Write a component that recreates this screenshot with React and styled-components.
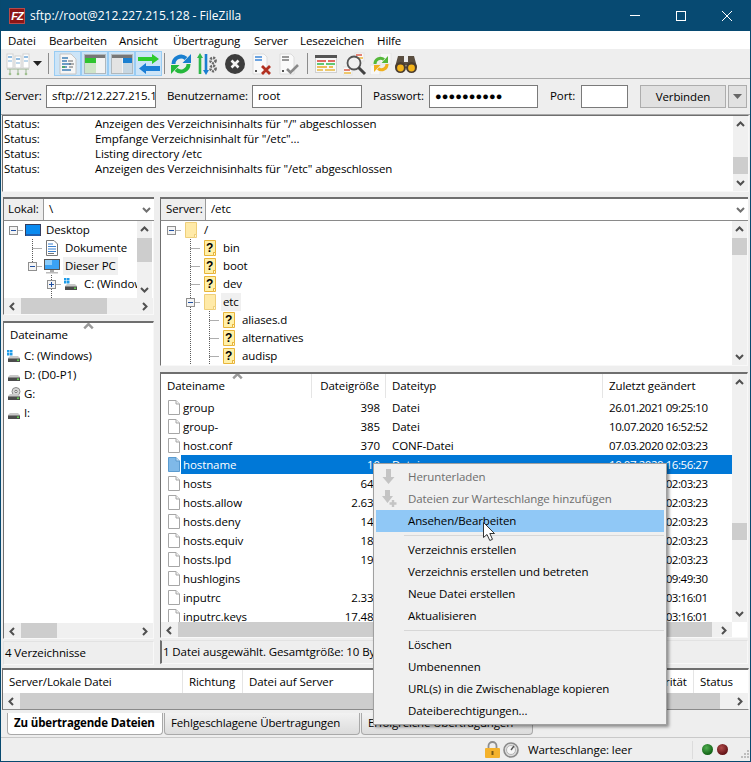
import React from "react";
import styled, { createGlobalStyle } from "styled-components";

const Global = createGlobalStyle`
  html, body { margin: 0; padding: 0; background: #f0f0f0; }
  #root { width: 751px; height: 762px; overflow: hidden; }
  * { box-sizing: border-box; }
`;

const Win = styled.div`
  position: relative; width: 751px; height: 762px; overflow: hidden;
  display: flex; flex-direction: column;
  background: #eeeeee; color: #000;
  border: 1px solid #08496f; border-top: 0;
  font-family: "Open Sans", "Noto Sans", sans-serif; font-size: 11.5px; letter-spacing: -0.1px;
  line-height: 16px; white-space: nowrap;
`;
const TitleBar = styled.div`
  height: 31px; flex: none; background: #074a72; color: #fff; display: flex; align-items: center;
  padding: 0 0 0 8px; font-size: 12px; letter-spacing: 0;
`;
const Logo = styled.span`
  width: 16px; height: 16px; background: #8c1515; border: 1px solid #b84a4a; color: #fff; flex: none;
  font: italic bold 11px/14px "Liberation Sans", sans-serif; text-align: center; letter-spacing: -1px; margin-right: 5px;
`;
const TitleText = styled.span` flex: 1; `;
const WinBtn = styled.span` width: 46px; height: 31px; display: flex; align-items: center; justify-content: center; flex: none; `;
const MenuBar = styled.div`
  height: 18px; flex: none; background: #fff; display: grid;
  grid-template-columns: 41px 70px 54px 81px 46px 77px auto; padding: 2px 0 0 7px; align-items: center;
`;
const Toolbar = styled.div`
  height: 30px; flex: none; background: #eeeeee; border-bottom: 1px solid #a8a8a8;
  display: flex; align-items: center; padding-left: 4px;
`;
const TBtn = styled.span`
  width: ${p => p.$w || 27}px; height: 25px; display: flex; align-items: center; justify-content: center; flex: none;
  margin-right: ${p => p.$mr || 0}px;
  ${p => p.$on ? "background:#cce4f7;border:1px solid #99ccf3;" : ""}
`;
const TSep = styled.span` width: 1px; height: 21px; background: #8c8c8c; margin: 0 ${p => p.$r || 4}px 0 ${p => p.$l || 4}px; flex: none; `;
const Quick = styled.div`
  height: 36px; flex: none; border-bottom: 1px solid #a8a8a8; display: flex; align-items: center; padding: 0 0 1px 4px;
`;
const QLabel = styled.span` width: ${p => p.$w}px; flex: none; `;
const QInput = styled.span`
  width: ${p => p.$w}px; height: 23px; flex: none; background: #fff; border: 1px solid #7a7a7a;
  padding: 2px 5px; overflow: hidden; margin-right: ${p => p.$mr}px;
  ${p => p.$dots ? "letter-spacing:0.1px;font-size:11px;line-height:16px;font-family:'Liberation Sans',sans-serif;" : ""}
`;
const QBtn = styled.span`
  width: ${p => p.$w}px; height: 23px; flex: none; background: #e1e1e1; border: 1px solid #adadad;
  text-align: center; line-height: 21px; margin-right: 2px; display:flex; align-items:center; justify-content:center;
`;
const Sunken = styled.div`
  background: #fff; border-top: 2px solid #6f6f6f; border-left: 1px solid #6f6f6f;
  border-right: 1px solid #f8f8f8; border-bottom: 1px solid #f8f8f8;
`;
const LogPane = styled(Sunken)`
  height: 77px; flex: none; margin: 0 1px 0 1px; display: flex; border-top-width: 1px;
`;
const LogBody = styled.div` flex: 1; padding: 0 0 0 1px; line-height: 15px; `;
const LogRow = styled.div` display: grid; grid-template-columns: 91px auto; `;
const PanesRow = styled.div` display: flex; flex: none; height: 466px; margin: 5px 0 0 2px; `;
const Col = styled.div` display: flex; flex-direction: column; width: ${p => p.$w}px; flex: none; margin-right: ${p => p.$mr || 0}px; `;
const PathBar = styled(Sunken)`
  height: 24px; flex: none; display: flex; border-bottom: 1px solid #8a8a8a; border-right: 0;
`;
const PathLabel = styled.span` width: ${p => p.$w}px; background: #eeeeee; padding: 2px 0 0 ${p => p.$pl}px; flex: none; border-right: 1px solid #9a9a9a; `;
const PathValue = styled.span` flex: 1; padding: 2px 0 0 5px; position: relative; `;
const TreeArea = styled(Sunken)`
  border-top: 0; height: ${p => p.$h}px; flex: none; display: flex; flex-wrap: wrap; align-content: flex-start; overflow: hidden;
`;
const TreeBody = styled.div` height: ${p => p.$h}px; width: ${p => p.$w}px; overflow: hidden; padding: 0 0 0 ${p => p.$pl}px; flex: none; `;
const TreeRow = styled.div` height: 18px; display: flex; align-items: center; `;
const TreeLabel = styled.span`
  margin-left: 1px; padding: 0 2px; height: 18px; line-height: 17px; ${p => p.$active ? "background:#f0f0f0;" : ""}
`;
const IconSlot = styled.span` width: 20px; height: 18px; display: flex; align-items: center; justify-content: center; flex: none; `;
const VBar = styled.div`
  width: 15px; flex: none; background: #f0f0f0; height: ${p => p.$h}px; display: flex; flex-direction: column;
`;
const VArrow = styled.span` height: 17px; flex: none; display: flex; align-items: center; justify-content: center; `;
const PathArrow = styled(VArrow)` width: 16px; height: 20px; `;
const VTrack = styled.span` flex: 1; display: block; padding-top: ${p => p.$top}px; `;
const VThumb = styled.span` display: block; background: #cdcdcd; height: ${p => p.$h}px; `;
const HBar = styled.div` height: 16px; background: #f0f0f0; display: flex; flex: none; width: ${p => p.$w ? p.$w + "px" : "100%"}; `;
const HArrow = styled.span` width: 17px; flex: none; display: flex; align-items: center; justify-content: center; `;
const HTrack = styled.span` flex: 1; padding-left: ${p => p.$left || 0}px; display: block; `;
const HThumb = styled.span` display: block; background: #cdcdcd; height: 16px; width: ${p => p.$w}px; `;
const Gap = styled.div` height: ${p => p.$h}px; flex: none; `;
const ListPane = styled(Sunken)` height: ${p => p.$h}px; flex: none; display: flex; flex-wrap: wrap; align-content: flex-start; position: relative; overflow: hidden; `;
const ListMain = styled.div` width: ${p => p.$w}px; height: ${p => p.$h}px; overflow: hidden; flex: none; `;
const Header = styled.div` height: ${p => p.$h || 24}px; display: grid; grid-template-columns: ${p => p.$cols}; align-items: center; `;
const HCell = styled.span`
  height: 100%; display: flex; align-items: center; padding: 0 6px; border-right: 1px solid #e5e5e5;
  justify-content: ${p => p.$right ? "flex-end" : "flex-start"}; &:last-child { border-right: 0; }
`;
const Caret = styled.span` position: absolute; left: ${p => p.$x}px; top: ${p => p.$y}px; line-height: 0; `;
const Row = styled.div` height: 19px; display: grid; grid-template-columns: ${p => p.$cols}; align-items: center; `;
const NameCell = styled.span`
  display: flex; align-items: center; height: 19px; padding-left: ${p => p.$pl || 6}px;
`;
const NameText = styled.span`
  padding-left: 2px; height: 19px; line-height: 19px; flex: 1; margin-left: 1px;
  ${p => p.$sel ? "background:#0078d7;color:#fff;" : ""}
`;
const Cell = styled.span`
  height: 19px; line-height: 19px; padding: 0 6px; overflow: hidden; text-align: ${p => p.$right ? "right" : "left"};
  ${p => p.$sel ? "background:#0078d7;color:#fff;" : ""}
  ${p => p.$date ? "letter-spacing:-0.45px;" : ""}
`;
const PaneStatus = styled.div`
  height: 24px; flex: none; margin-top: 2px; padding: 3px 0 0 1px; background: #eeeeee;
  border: 1px solid; border-color: #e2e2e2 #f8f8f8 #f8f8f8 #6f6f6f; ${p => p.$plain ? "border-left-color:#e2e2e2;" : "border-left-width:2px;"}
`;
const Queue = styled(Sunken)` height: 42px; flex: none; margin: 5px 1px 0 1px; border-bottom: 1px solid #8a8a8a; overflow: hidden; `;
const Tabs = styled.div` height: 25px; flex: none; margin-top: 3px; padding-left: 6px; display: flex; border-bottom: 1px solid #c9c9c9; `;
const Tab = styled.span`
  width: ${p => p.$w}px; height: 22px; flex: none; margin-right: 1px; padding: 2px 0 0 6px;
  border: 1px solid #a9a9a9; border-top: 0; border-radius: 0 0 4px 4px;
  background: ${p => p.$on ? "#ffffff" : "linear-gradient(#f2f2f2,#dcdcdc)"};
  font-weight: ${p => p.$on ? 700 : 400}; letter-spacing: -0.15px;
`;
const StatusBar = styled.div` flex: 1; display: flex; align-items: center; padding-left: 484px; `;
const StatusGap = styled.span` width: 3px; flex: none; `;
const QueueText = styled.span` margin-left: 9px; width: 164px; flex: none; `;
const SDiv = styled.span` width: 1px; height: 18px; background: #dcdcdc; flex: none; margin-right: 9px; `;
const CtxMenu = styled.div`
  position: absolute; left: 372px; top: 463px; width: 294px; height: 262px; background: #f0f0f0;
  border: 1px solid #a0a0a0; box-shadow: 2px 2px 3px rgba(0,0,0,.42); padding: 2px 2px;
`;
const CtxItem = styled.div`
  height: 22px; display: flex; align-items: center; color: ${p => p.$off ? "#6d6d6d" : "#000"};
  background: ${p => p.$hot ? "#90c8f6" : "transparent"}; position: relative; padding-left: 32px;
`;
const CtxIcon = styled.span` position: absolute; left: 3px; top: 0; width: 20px; height: 22px; display:flex; align-items:center; justify-content:center; `;
const CtxSep = styled.div` height: 1px; background: #d7d7d7; margin: 3px 0 3px 28px; `;
const Cursor = styled.span` position: absolute; left: 481px; top: 521px; line-height: 0; `;

const Chev = ({ d = "up", c = "#505050", w = 9 }) => {
  const p = { up: "M1 6 L4.5 2.5 L8 6", down: "M1 3 L4.5 6.5 L8 3", left: "M6 1 L2.5 4.5 L6 8", right: "M3 1 L6.5 4.5 L3 8" }[d];
  return <svg width={w} height={w} viewBox="0 0 9 9"><path d={p} fill="none" stroke={c} strokeWidth="2" /></svg>;
};
const Sb = ({ h, top, th }) => (
  <VBar $h={h}>
    <VArrow><Chev d="up" /></VArrow>
    <VTrack $top={top}><VThumb $h={th} /></VTrack>
    <VArrow><Chev d="down" /></VArrow>
  </VBar>
);
const Hs = ({ left, tw, w, noRight }) => (
  <HBar $w={w}>
    <HArrow><Chev d="left" /></HArrow>
    <HTrack $left={left}><HThumb $w={tw} /></HTrack>
    {!noRight && <HArrow><Chev d="right" /></HArrow>}
  </HBar>
);

const FileIcon = ({ sel }) => (
  <svg width="12" height="15" viewBox="0 0 12 15" style={{ flex: "none" }}>
    <path d="M.5.5H8L11.5 4V14.5H.5Z" fill={sel ? "#7fb9e8" : "#fff"} stroke={sel ? "#5a9bd0" : "#a6a6a6"} />
    <path d="M8 .5V4H11.5" fill={sel ? "#cfe4f6" : "#f2f2f2"} stroke={sel ? "#5a9bd0" : "#a6a6a6"} />
  </svg>
);
const Folder = () => (
  <svg width="12" height="16" viewBox="0 0 12 16">
    <path d="M.5.5H11.5V12.5H9.5V15.5H.5Z" fill="#ffeaa8" stroke="#efcf7a" />
    <path d="M9.5 12.5H11.5V15.5H9.5Z" fill="#fff6d5" stroke="#efcf7a" />
  </svg>
);
const QFolder = () => (
  <svg width="12" height="16" viewBox="0 0 12 16">
    <path d="M.5.5H11.5V12.5H9.5V15.5H.5Z" fill="#fff0a8" stroke="#e8b53a" />
    <path d="M9.5 12.5H11.5V15.5H9.5Z" fill="#fff6d5" stroke="#e8b53a" />
    <text x="5.5" y="11.5" textAnchor="middle" fontFamily="Liberation Sans" fontWeight="700" fontSize="12" fill="#000">?</text>
  </svg>
);
const Desktop = () => (
  <svg width="16" height="13" viewBox="0 0 16 13">
    <rect x=".5" y=".5" width="15" height="11" fill="#0a8bf0" stroke="#333d5e" />
    <rect x="1" y="10" width="14" height="2" fill="#1f5fb0" />
  </svg>
);
const Monitor = () => (
  <svg width="16" height="15" viewBox="0 0 16 15">
    <rect x=".5" y=".5" width="15" height="10" fill="#3aa2f4" stroke="#555" />
    <rect x="1" y="1" width="7" height="5" fill="#8cccfa" />
    <rect x="6" y="11" width="4" height="2" fill="#aaa" />
    <rect x="2" y="13" width="12" height="1.5" fill="#bbb" />
  </svg>
);
const DocIcon = () => (
  <svg width="12" height="16" viewBox="0 0 12 16">
    <path d="M.5.5H8L11.5 4V15.5H.5Z" fill="#fff" stroke="#777" />
    <path d="M2 4H7M2 6.5H10M2 9H10M2 11.5H10" stroke="#3a80d0" strokeWidth="1" />
    <path d="M2 13.5H8" stroke="#777" />
  </svg>
);
const Drive = ({ win, cd }) => (
  <svg width="14" height="14" viewBox="0 0 14 14">
    {cd && <><circle cx="9" cy="4.5" r="4" fill="#d8d8d8" stroke="#8a8a8a" /><circle cx="9" cy="4.5" r="1.2" fill="#fff" stroke="#777" /></>}
    <path d="M1 9 L3 7 H11 L13 9 V13 H1Z" fill="#c9c9c9" />
    <rect x="1" y="9.5" width="12" height="3.5" fill="#4c4c4c" />
    <rect x="10" y="10.5" width="2" height="1.4" fill="#62d84e" />
    {win && <><rect x="0" y="1" width="2.5" height="2.5" fill="#1e9be8" /><rect x="3" y="1" width="2.5" height="2.5" fill="#1e9be8" /><rect x="0" y="4" width="2.5" height="2.5" fill="#1e9be8" /><rect x="3" y="4" width="2.5" height="2.5" fill="#1e9be8" /></>}
  </svg>
);
/* kind: blank | pipe | tee | minus | minusUp | minusPipe | plusPipe */
const Guide = ({ kind }) => {
  const dot = { stroke: "#5c5c5c", strokeDasharray: "1 1", fill: "none" };
  const v = kind === "pipe" || kind === "tee" || kind === "minusPipe" || kind === "plusPipe";
  const box = kind.startsWith("minus") || kind.startsWith("plus");
  return (
    <svg width="19" height="18" viewBox="0 0 19 18" style={{ flex: "none" }}>
      {v && <path d="M9.5 0V18" {...dot} />}
      {kind === "minusUp" && <path d="M9.5 0V9" {...dot} />}
      {(kind === "tee" || box) && <path d="M9.5 9.5H19" {...dot} />}
      {box && <rect x="5.5" y="5.5" width="8" height="8" fill="#f4f4f4" stroke="#8f8f8f" />}
      {box && <path d="M7 9.5H12" stroke="#1f4fa0" />}
      {kind.startsWith("plus") && <path d="M9.5 7V12" stroke="#1f4fa0" />}
    </svg>
  );
};

const Site = () => (
  <svg width="24" height="24" viewBox="0 0 24 24">
    <path d="M1 17H23M4 17V22M12 17V22M20 17V22" stroke="#9ab592" strokeWidth="1" fill="none" />
    <circle cx="4" cy="22" r="1.3" fill="#9fc08f" /><circle cx="12" cy="22" r="1.3" fill="#9fc08f" /><circle cx="20" cy="22" r="1.3" fill="#9fc08f" />
    {[1, 9, 17].map((x, i) => (
      <g key={x}><rect x={x} y={i === 1 ? 4 : 2} width="6" height={i === 1 ? 12 : 14} fill="#fff" stroke="#d2d2d2" />
        <rect x={x + 1} y={(i === 1 ? 4 : 2) + 2} width="4" height="2" fill="#93bde2" />
        <rect x={x + 1} y={(i === 1 ? 4 : 2) + 6} width="4" height="2" fill="#c0d8ec" /></g>
    ))}
  </svg>
);
const QLog = () => (
  <svg width="18" height="22" viewBox="0 0 18 22">
    <path d="M1 1H12L17 6V21H1Z" fill="#f6f6f6" stroke="#c4c4c4" />
    <path d="M3 5H9M3 8H8M3 11H12M3 14H8M3 17H12" stroke="#3f7fb5" strokeWidth="1.4" />
    <path d="M9 8H14M10 11H15M10 14H14" stroke="#666" strokeWidth="1.2" />
    <path d="M3 14H6" stroke="#3ea84a" strokeWidth="1.4" />
  </svg>
);
const Panel = ({ right }) => (
  <svg width="22" height="20" viewBox="0 0 22 20">
    <rect x=".5" y=".5" width="21" height="19" fill="#f3f3f3" stroke="#b0b8bd" />
    <rect x="1" y="1" width="20" height="3" fill="#777" />
    {right ? <><rect x="12" y="4" width="9" height="5" fill="#1a7fd0" /><rect x="12" y="9" width="9" height="10" fill="#c7d7e2" /><rect x="1" y="4" width="10" height="15" fill="#e3e3e3" /></>
      : <><rect x="1" y="4" width="11" height="5" fill="#2fc42f" /><rect x="1" y="9" width="11" height="10" fill="#cfe4c9" /></>}
  </svg>
);
const Transfer = () => (
  <svg width="22" height="20" viewBox="0 0 22 20">
    <path d="M0 3H14V0L21 5L14 10V7H0Z" fill="#2ecb2e" />
    <path d="M22 12H8V9L1 14.5L8 20V17H22Z" fill="#1c7fd6" />
  </svg>
);
const Refresh = () => (
  <svg width="22" height="22" viewBox="0 0 22 22">
    <path d="M3.5 11A7.5 7.5 0 0 1 16 5.5" fill="none" stroke="#1a7fd0" strokeWidth="4" />
    <path d="M21 10H12.5L21 1Z" fill="#1a7fd0" />
    <path d="M18.5 11A7.5 7.5 0 0 1 6 16.5" fill="none" stroke="#25b83c" strokeWidth="4" />
    <path d="M1 12H9.5L1 21Z" fill="#25b83c" />
  </svg>
);
const FilterIc = () => (
  <svg width="22" height="22" viewBox="0 0 22 22">
    <path d="M3 0L6 5H4.300V21H1.700V5H0Z" fill="#2fb84a" />
    <path d="M9 22L6 17H7.700V1H10.300V17H12Z" fill="#1a7fd0" />
    <circle cx="16" cy="7.500" r="2.600" fill="none" stroke="#6a6a6a" strokeWidth="2.600" strokeDasharray="2 1" />
    <circle cx="16" cy="15.500" r="2.600" fill="none" stroke="#6a6a6a" strokeWidth="2.600" strokeDasharray="2 1" />
  </svg>
);
const CancelIc = () => (
  <svg width="20" height="20" viewBox="0 0 20 20">
    <circle cx="10" cy="10" r="10" fill="#3d3d3d" />
    <path d="M6.5 6.5L13.5 13.5M13.5 6.5L6.5 13.5" stroke="#f4f4f4" strokeWidth="2.6" />
  </svg>
);
const DocX = ({ check }) => (
  <svg width="22" height="22" viewBox="0 0 22 22">
    <path d="M2 1H13L16 4V21H2Z" fill="#fafafa" stroke="#dcdcdc" />
    <path d="M4 4H11M4 7H11" stroke={check ? "#777" : "#3d87d8"} strokeWidth="1.6" />
    <rect x="4" y="17" width="2" height="2" fill="#555" />
    {check ? <path d="M9 16L12.5 19.5L20 12" fill="none" stroke="#8a8a8a" strokeWidth="2.6" />
      : <path d="M11 13L19 21M19 13L11 21" stroke="#b23020" strokeWidth="2.8" />}
  </svg>
);
const TableIc = () => (
  <svg width="22" height="20" viewBox="0 0 22 20">
    <rect x=".5" y="1.5" width="21" height="17" fill="#f8f8f8" stroke="#d0d0d0" />
    <rect x="0" y="1" width="22" height="3" fill="#555" />
    <path d="M2 7H11M13 7H20" stroke="#d83a30" strokeWidth="1.6" />
    <path d="M2 10H9M11 10H20" stroke="#2fb84a" strokeWidth="1.6" />
    <path d="M2 13H12M14 13H18" stroke="#e8a820" strokeWidth="1.6" />
    <path d="M2 16H8M10 16H20" stroke="#e8b840" strokeWidth="1.6" />
  </svg>
);
const SearchIc = () => (
  <svg width="24" height="24" viewBox="0 0 24 24">
    <rect x="12" y="1" width="9" height="8" fill="#fafafa" stroke="#e2e2e2" />
    <path d="M13 3H19" stroke="#d8503a" strokeWidth="1.4" /><path d="M14 6H20" stroke="#e8b030" strokeWidth="1.4" />
    <rect x="0" y="15" width="9" height="8" fill="#fafafa" stroke="#e2e2e2" />
    <path d="M1 18H7" stroke="#d8503a" strokeWidth="1.4" /><path d="M1 21H8" stroke="#e8b030" strokeWidth="1.4" />
    <circle cx="11" cy="11" r="6.5" fill="#f4f4f4" fillOpacity=".6" stroke="#555" strokeWidth="1.8" />
    <path d="M15.5 15.5L22 22" stroke="#444" strokeWidth="3" />
  </svg>
);
const SyncIc = () => (
  <svg width="22" height="22" viewBox="0 0 22 22">
    <rect x="10" y="0" width="11" height="11" fill="#f7f7f7" stroke="#e4e4e4" />
    <rect x="0" y="12" width="10" height="10" fill="#f7f7f7" stroke="#e4e4e4" />
    <path d="M5 11A5.5 5.5 0 0 1 14 6.5" fill="none" stroke="#55b83a" strokeWidth="3" />
    <path d="M18 10H11.5L18 3Z" fill="#55b83a" />
    <path d="M17 11A5.5 5.5 0 0 1 8 15.5" fill="none" stroke="#f0b01e" strokeWidth="3" />
    <path d="M4 12H10.5L4 19Z" fill="#f0b01e" />
  </svg>
);
const Binoc = () => (
  <svg width="22" height="20" viewBox="0 0 22 20">
    <path d="M3 2H9V8H13V2H19L22 13H12V11H10V13H0Z" fill="#5a4e40" />
    <circle cx="5.5" cy="13.5" r="5.5" fill="#4a3d30" /><circle cx="16.5" cy="13.5" r="5.5" fill="#4a3d30" />
    <circle cx="5.5" cy="14" r="3.4" fill="#f4b41a" /><circle cx="16.5" cy="14" r="3.4" fill="#f4b41a" />
  </svg>
);
const GreyDown = ({ plus }) => (
  <svg width="18" height="20" viewBox="0 0 18 20">
    <path d={plus ? "M5 1H10V7H13L7.5 14L2 7H5Z" : "M6 2H11V10H14.5L8.5 17L2.5 10H6Z"} fill="#c4c4c4" />
    {plus && <path d="M13 11V18M9.5 14.5H16.5" stroke="#c4c4c4" strokeWidth="2.4" />}
  </svg>
);
const Lock = () => (
  <svg width="15" height="17" viewBox="0 0 15 17">
    <path d="M3.5 8V5A4 4 0 0 1 11.5 5V8" fill="none" stroke="#8d8d8d" strokeWidth="1.8" />
    <rect x="0" y="7" width="15" height="10" rx="1" fill="#f4b22c" />
    <rect x="6.5" y="10" width="2" height="4" fill="#7a5a14" />
  </svg>
);
const Gauge = () => (
  <svg width="16" height="16" viewBox="0 0 16 16">
    <circle cx="8" cy="8" r="7" fill="#dcdcdc" stroke="#8a8a8a" strokeWidth="1.6" />
    <circle cx="8" cy="8" r="4.5" fill="#f6f6f6" stroke="#b5b5b5" />
    <path d="M8 8L11 4" stroke="#555" strokeWidth="1.4" />
  </svg>
);
const Led = ({ c, d }) => (
  <svg width="11" height="11" viewBox="0 0 11 11" style={{ marginRight: 4, flex: "none" }}>
    <defs><radialGradient id={c} cx=".4" cy=".35" r=".7"><stop offset="0" stopColor={c} /><stop offset="1" stopColor={d} /></radialGradient></defs>
    <circle cx="5.5" cy="5.5" r="5.5" fill={`url(#${c})`} />
  </svg>
);
const Grip = () => (
  <svg width="10" height="10" viewBox="0 0 10 10" style={{ marginLeft: 8, marginTop: 8 }}>
    {[[7, 1], [4, 4], [7, 4], [1, 7], [4, 7], [7, 7]].map(([x, y]) => <rect key={x + "-" + y} x={x} y={y} width="2" height="2" fill="#bdbdbd" />)}
  </svg>
);

const COLS = "151px 74px 217px 1fr";
const files = [
  ["group", "398", "Datei", "26.01.2021 09:25:10"],
  ["group-", "385", "Datei", "10.07.2020 16:52:52"],
  ["host.conf", "370", "CONF-Datei", "07.03.2020 02:03:23"],
  ["hostname", "10", "Datei", "10.07.2020 16:56:27", true],
  ["hosts", "643", "", "07.03.2020 02:03:23"],
  ["hosts.allow", "2.632", "", "07.03.2020 02:03:23"],
  ["hosts.deny", "145", "", "07.03.2020 02:03:23"],
  ["hosts.equiv", "188", "", "07.03.2020 02:03:23"],
  ["hosts.lpd", "199", "", "07.03.2020 02:03:23"],
  ["hushlogins", "", "", "07.03.2020 09:49:30"],
  ["inputrc", "2.334", "", "07.03.2020 03:16:01"],
  ["inputrc.keys", "17.480", "", "07.03.2020 03:16:01"],
];

const Tree = ({ guides, icon, label, active }) => (
  <TreeRow>
    {guides.map((g, i) => <Guide key={i} kind={g} />)}
    {icon && <IconSlot>{icon}</IconSlot>}
    {label && <TreeLabel $active={active}>{label}</TreeLabel>}
  </TreeRow>
);

export default function App() {
  return (
    <Win>
      <Global />
      <TitleBar>
        <Logo>FZ</Logo>
        <TitleText>sftp://root@212.227.215.128 - FileZilla</TitleText>
        <WinBtn><svg width="10" height="10" viewBox="0 0 10 10"><path d="M0 4.5H10" stroke="#fff" /></svg></WinBtn>
        <WinBtn><svg width="10" height="10" viewBox="0 0 10 10"><rect x=".5" y=".5" width="9" height="9" fill="none" stroke="#fff" /></svg></WinBtn>
        <WinBtn><svg width="10" height="10" viewBox="0 0 10 10"><path d="M0 0L10 10M10 0L0 10" stroke="#fff" /></svg></WinBtn>
      </TitleBar>
      <MenuBar>
        {["Datei", "Bearbeiten", "Ansicht", "Übertragung", "Server", "Lesezeichen", "Hilfe"].map(m => <span key={m}>{m}</span>)}
      </MenuBar>
      <Toolbar>
        <TBtn $w={26}><Site /></TBtn>
        <TBtn $w={13}><svg width="9" height="5" viewBox="0 0 9 5"><path d="M0 0H9L4.500 5Z" fill="#222" /></svg></TBtn>
        <TSep $l={4} $r={5} />
        <TBtn $on><QLog /></TBtn>
        <TBtn $on><Panel /></TBtn>
        <TBtn $on><Panel right /></TBtn>
        <TBtn $on><Transfer /></TBtn>
        <TSep $l={2} $r={5} />
        <TBtn $w={22} $mr={5}><Refresh /></TBtn>
        <TBtn $w={22} $mr={5}><FilterIc /></TBtn>
        <TBtn $w={22} $mr={5}><CancelIc /></TBtn>
        <TBtn $w={22} $mr={5}><DocX /></TBtn>
        <TBtn $w={22} $mr={5}><DocX check /></TBtn>
        <TSep $l={2} $r={7} />
        <TBtn $w={22} $mr={6}><TableIc /></TBtn>
        <TBtn $w={24} $mr={3}><SearchIc /></TBtn>
        <TBtn $w={22} $mr={3}><SyncIc /></TBtn>
        <TBtn $w={22}><Binoc /></TBtn>
      </Toolbar>
      <Quick>
        <QLabel $w={41}>Server:</QLabel>
        <QInput $w={110} $mr={11}>sftp://212.227.215.1</QInput>
        <QLabel $w={85}>Benutzername:</QLabel>
        <QInput $w={110} $mr={11}>root</QInput>
        <QLabel $w={56}>Passwort:</QLabel>
        <QInput $w={109} $mr={12} $dots>●●●●●●●●●●</QInput>
        <QLabel $w={31}>Port:</QLabel>
        <QInput $w={47} $mr={12} />
        <QBtn $w={86}>Verbinden</QBtn>
        <QBtn $w={19}><svg width="9" height="5" viewBox="0 0 9 5"><path d="M0 0H9L4.500 5Z" fill="#666" /></svg></QBtn>
      </Quick>
      <LogPane>
        <LogBody>
          <LogRow><span>Status:</span><span>Anzeigen des Verzeichnisinhalts für "/" abgeschlossen</span></LogRow>
          <LogRow><span>Status:</span><span>Empfange Verzeichnisinhalt für "/etc"...</span></LogRow>
          <LogRow><span>Status:</span><span>Listing directory /etc</span></LogRow>
          <LogRow><span>Status:</span><span>Anzeigen des Verzeichnisinhalts für "/etc" abgeschlossen</span></LogRow>
        </LogBody>
        <Sb h={75} top={24} th={17} />
      </LogPane>
      <PanesRow>
        <Col $w={151} $mr={6}>
          <PathBar>
            <PathLabel $w={40} $pl={4}>Lokal:</PathLabel>
            <PathValue>\</PathValue>
            <PathArrow><Chev d="down" c="#707070" /></PathArrow>
          </PathBar>
          <TreeArea $h={94}>
            <TreeBody $w={133} $h={77} $pl={0}>
              <Tree guides={["minus"]} icon={<Desktop />} label="Desktop" />
              <Tree guides={["blank", "tee"]} icon={<DocIcon />} label="Dokumente" />
              <Tree guides={["blank", "minusUp"]} icon={<Monitor />} label="Dieser PC" active />
              <Tree guides={["blank", "blank", "plusPipe"]} icon={<Drive win />} label="C: (Windows)" />
              <Tree guides={["blank", "blank", "pipe"]} />
            </TreeBody>
            <Sb h={77} top={0} th={24} />
            <Hs left={0} tw={86} />
          </TreeArea>
          <Gap $h={6} />
          <ListPane $h={318}>
            <Caret $x={79} $y={-2}><Chev d="up" c="#9a9a9a" w={11} /></Caret>
            <ListMain $w={149} $h={300}>
              <Header $h={23} $cols="1fr"><HCell>Dateiname</HCell></Header>
              {[["C: (Windows)", <Drive win key="c" />], ["D: (D0-P1)", <Drive key="d" />], ["G:", <Drive cd key="g" />], ["I:", <Drive key="i" />]].map(([t, ic]) => (
                <Row key={t} $cols="1fr"><NameCell $pl={3}>{ic}<NameText>{t}</NameText></NameCell></Row>
              ))}
            </ListMain>
            <Hs left={0} tw={36} w={149} />
          </ListPane>
          <PaneStatus $plain>4 Verzeichnisse</PaneStatus>
        </Col>
        <Col $w={588}>
          <PathBar>
            <PathLabel $w={45} $pl={5}>Server:</PathLabel>
            <PathValue>/etc</PathValue>
            <PathArrow><Chev d="down" c="#707070" /></PathArrow>
          </PathBar>
          <TreeArea $h={145}>
            <TreeBody $w={571} $h={144} $pl={1}>
              <Tree guides={["minus"]} icon={<Folder />} label="/" />
              <Tree guides={["blank", "tee"]} icon={<QFolder />} label="bin" />
              <Tree guides={["blank", "tee"]} icon={<QFolder />} label="boot" />
              <Tree guides={["blank", "tee"]} icon={<QFolder />} label="dev" />
              <Tree guides={["blank", "minusPipe"]} icon={<Folder />} label="etc" active />
              <Tree guides={["blank", "pipe", "tee"]} icon={<QFolder />} label="aliases.d" />
              <Tree guides={["blank", "pipe", "tee"]} icon={<QFolder />} label="alternatives" />
              <Tree guides={["blank", "pipe", "tee"]} icon={<QFolder />} label="audisp" />
            </TreeBody>
            <Sb h={144} top={0} th={17} />
          </TreeArea>
          <Gap $h={6} />
          <ListPane $h={266}>
            <Caret $x={71} $y={-3}><Chev d="up" c="#9a9a9a" w={11} /></Caret>
            <ListMain $w={571} $h={248}>
              <Header $cols={COLS}>
                <HCell>Dateiname</HCell>
                <HCell $right>Dateigröße</HCell>
                <HCell>Dateityp</HCell>
                <HCell>Zuletzt geändert</HCell>
              </Header>
              {files.map(f => (
                <Row key={f[0]} $cols={COLS}>
                  <NameCell $pl={7}><FileIcon sel={f[4]} /><NameText $sel={f[4]}>{f[0]}</NameText></NameCell>
                  <Cell $right $sel={f[4]}>{f[1]}</Cell>
                  <Cell $sel={f[4]}>{f[2]}</Cell>
                  <Cell $date $sel={f[4]}>{f[3]}</Cell>
                </Row>
              ))}
            </ListMain>
            <Sb h={248} top={132} th={17} />
            <Hs left={0} tw={534} w={571} />
          </ListPane>
          <PaneStatus>1 Datei ausgewählt. Gesamtgröße: 10 Bytes</PaneStatus>
        </Col>
      </PanesRow>
      <Queue>
        <Header $h={23} $cols="180px 60px 395px 56px 1fr">
          <HCell>Server/Lokale Datei</HCell>
          <HCell>Richtung</HCell>
          <HCell>Datei auf Server</HCell>
          <HCell>Priorität</HCell>
          <HCell>Status</HCell>
        </Header>
        <Hs left={0} tw={700} />
      </Queue>
      <Tabs>
        <Tab $w={156} $on>Zu übertragende Dateien</Tab>
        <Tab $w={196}>Fehlgeschlagene Übertragungen</Tab>
        <Tab $w={172}>Erfolgreiche Übertragungen</Tab>
      </Tabs>
      <StatusBar>
        <Lock />
        <StatusGap />
        <Gauge />
        <QueueText>Warteschlange: leer</QueueText>
        <SDiv />
        <Led c="#4fae4f" d="#0c5a10" />
        <Led c="#b04a4a" d="#5a0c10" />
        <Grip />
      </StatusBar>
      <CtxMenu>
        <CtxItem $off><CtxIcon><GreyDown /></CtxIcon>Herunterladen</CtxItem>
        <CtxItem $off><CtxIcon><GreyDown plus /></CtxIcon>Dateien zur Warteschlange hinzufügen</CtxItem>
        <CtxItem $hot>Ansehen/Bearbeiten</CtxItem>
        <CtxSep />
        <CtxItem>Verzeichnis erstellen</CtxItem>
        <CtxItem>Verzeichnis erstellen und betreten</CtxItem>
        <CtxItem>Neue Datei erstellen</CtxItem>
        <CtxItem>Aktualisieren</CtxItem>
        <CtxSep />
        <CtxItem>Löschen</CtxItem>
        <CtxItem>Umbenennen</CtxItem>
        <CtxItem>URL(s) in die Zwischenablage kopieren</CtxItem>
        <CtxItem>Dateiberechtigungen...</CtxItem>
      </CtxMenu>
      <Cursor>
        <svg width="14" height="21" viewBox="0 0 14 21"><path d="M1.500 1.500V16.500L5 13.500L7.800 19.500L10.500 18.300L7.800 12.500H12.500Z" fill="#fff" stroke="#333" strokeWidth="1" /></svg>
      </Cursor>
    </Win>
  );
}
